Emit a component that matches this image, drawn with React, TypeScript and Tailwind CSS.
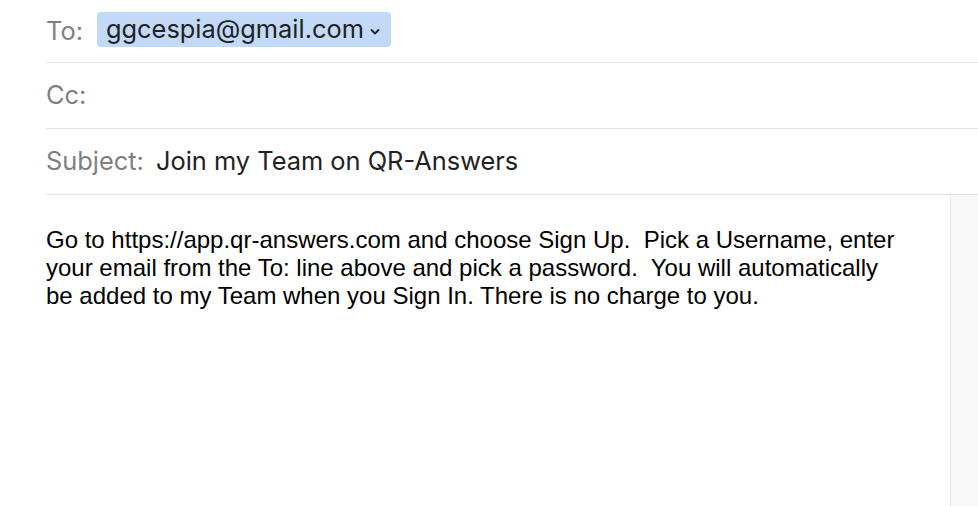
import React from "react";

export default function App() {
  const sf = { fontFamily: "Inter, 'Noto Sans', sans-serif" };
  return (
    <div className="w-[978px] h-[506px] bg-white overflow-hidden flex flex-col" >
      <div className="pl-[46px] flex flex-col" style={sf}>
        <div className="h-[63px] flex items-center border-b border-[#e3e3e3] text-[25.4px]">
          <span className="text-[#7f7f7f]">To:</span>
          <span className="ml-[14px] h-[35px] mb-[3px] pl-[9px] pr-[10px] rounded-[4px] bg-[#c2d9f8] text-[#222222] flex items-center">
            ggcespia@gmail.com
            <svg width="12" height="8" viewBox="0 0 12 8" className="ml-[5px] mt-[4px]">
              <path d="M2.5 2 L6 5.5 L9.5 2" fill="none" stroke="#222" strokeWidth="1.9" strokeLinecap="round" strokeLinejoin="round" />
            </svg>
          </span>
        </div>
        <div className="h-[66px] flex items-center border-b border-[#e3e3e3] text-[25.4px]">
          <span className="text-[#7f7f7f]">Cc:</span>
        </div>
        <div className="h-[66px] flex items-center border-b border-[#e3e3e3] text-[25.4px]">
          <span className="text-[#7f7f7f]">Subject:</span>
          <span className="ml-[12px] text-[#222222]">Join my Team on QR-Answers</span>
        </div>
      </div>
      <div className="flex flex-1">
        <div className="flex-1 pl-[46px] pt-[31px] text-[24px] leading-[28px] text-black" style={{ fontFamily: "'Liberation Sans', Arial, sans-serif" }}>
          <div className="whitespace-pre">Go to https://app.qr-answers.com and choose Sign Up.  Pick a Username, enter</div>
          <div className="whitespace-pre">your email from the To: line above and pick a password.  You will automatically</div>
          <div className="whitespace-pre">be added to my Team when you Sign In. There is no charge to you.</div>
        </div>
        <div className="w-[28px] bg-[#f8f8f8] border-l border-[#e6e6e6]" />
      </div>
    </div>
  );
}
